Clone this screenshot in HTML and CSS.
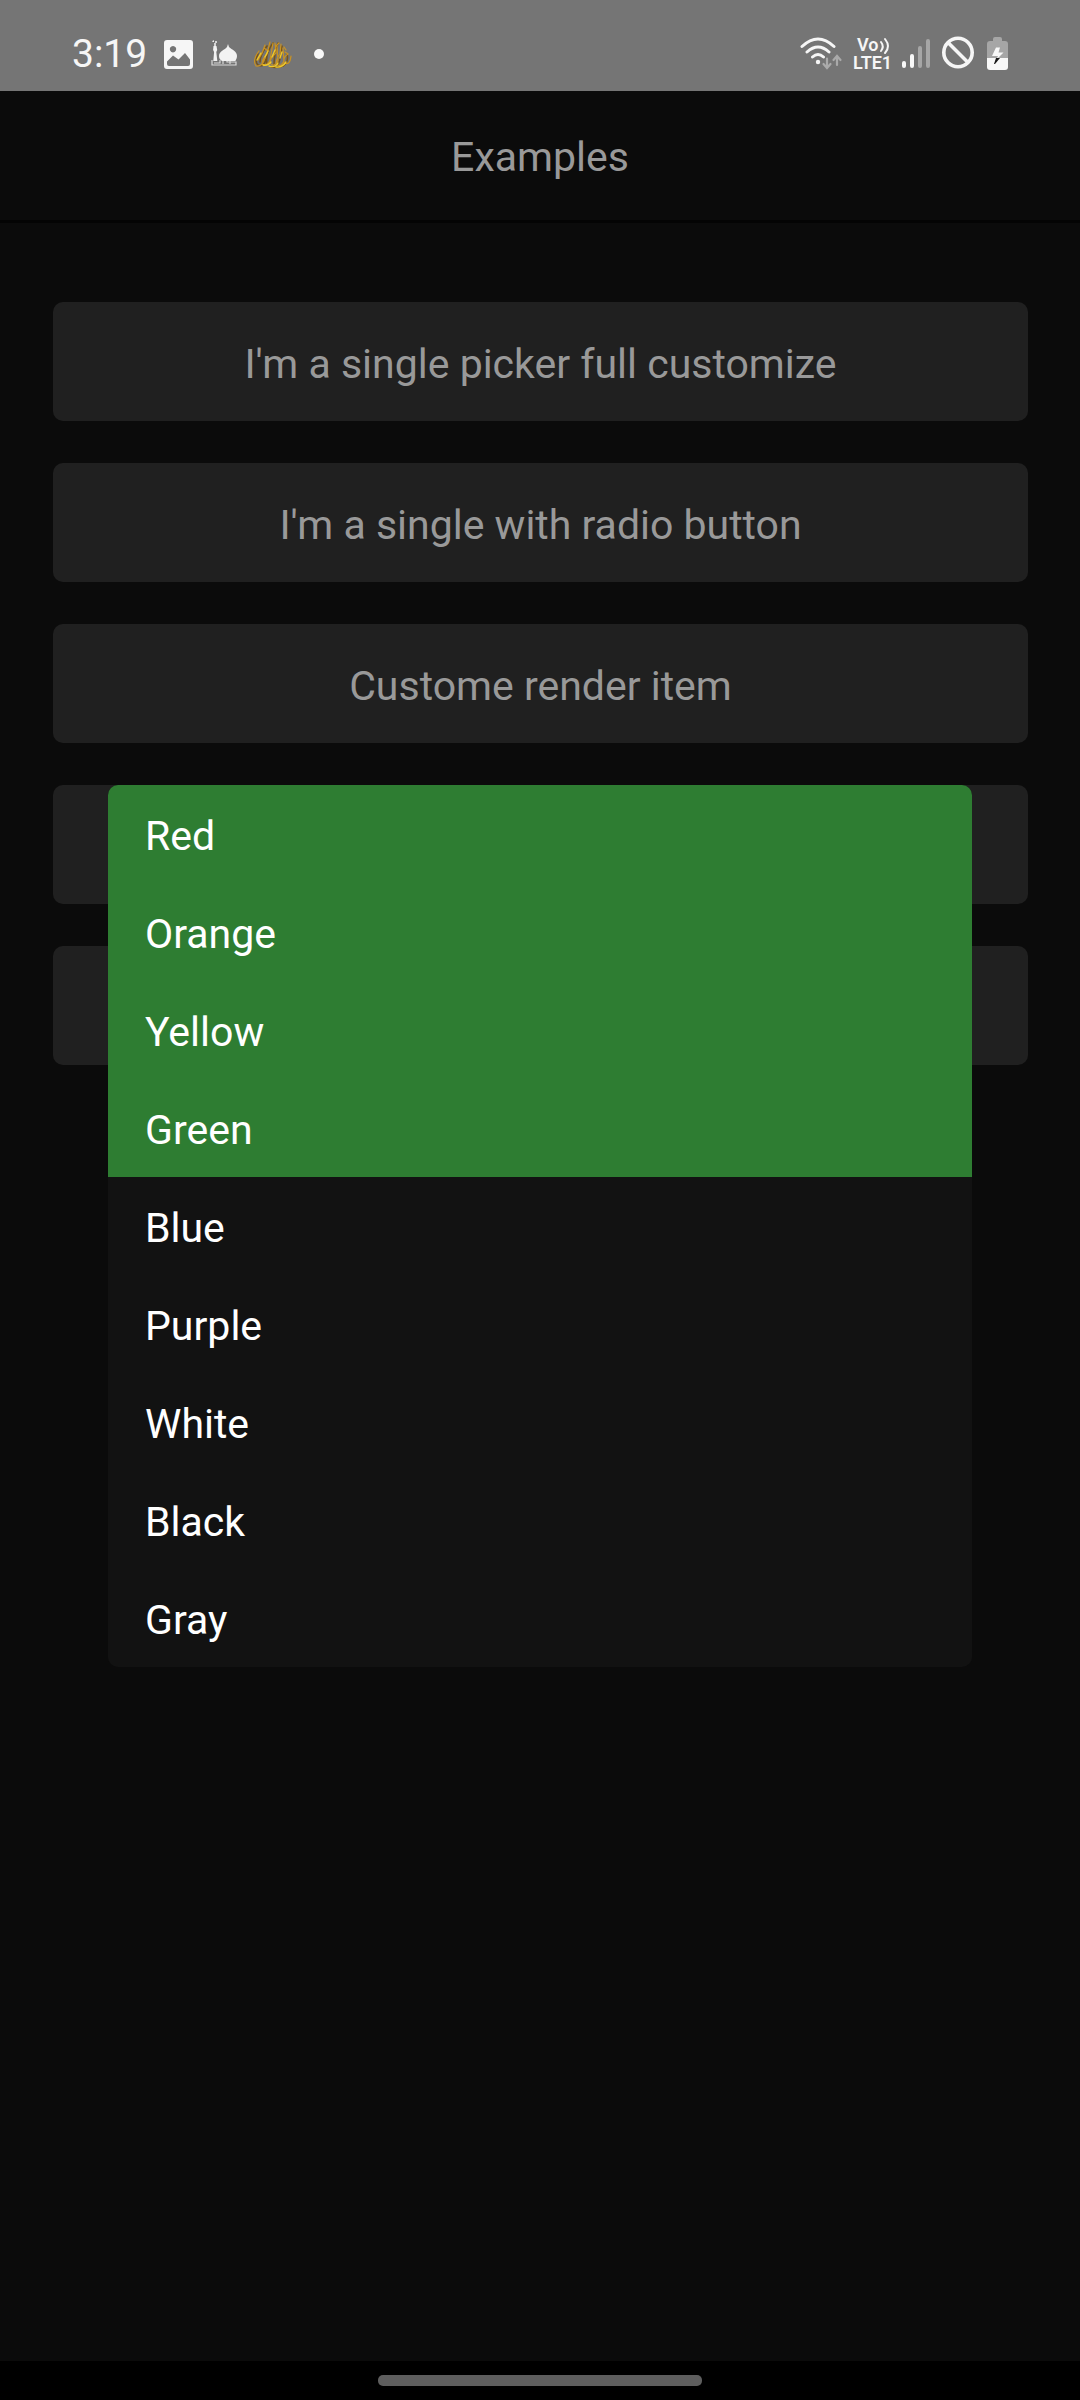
FILE: index.html
```html
<!DOCTYPE html>
<html lang="en">
<head>
<meta charset="utf-8">
<meta name="viewport" content="width=device-width, initial-scale=1">
<title>Examples</title>
<link rel="stylesheet" href="styles.css">
</head>
<body>
<div class="status-bar">
  <div class="status-group">
    <span class="clock">3:19</span>
    <svg width="32" height="36" viewBox="163 36 32 36">
      <path fill="#f6f6f6" fill-rule="evenodd" d="M167 40h23q3 0 3 3v23q0 3-3 3h-23q-3 0-3-3V43q0-3 3-3zM173 46a3.200 3.200 0 1 0 .01 0zM167 61.500V64q0 2 2 2h19q2 0 2-2v-4.500l-5-6.500-6.500 6.500-5.500-4z"/>
    </svg>
    <svg width="26" height="36" viewBox="212 36 26 36" fill="none" stroke="#f2f2f2">
      <path fill="#f2f2f2" stroke="none" d="M229 44l1 3c3 3 8 4 8 9 0 2-1 4-2 5h-13c-2-1-3-3-3-5 0-5 6-6 8-9zM214.500 46h3l.7 4-.9 2 1 9h-4l.8-9-1-2z"/>
      <path d="M216 47v-4M214 42q0-1 1-1M217 41v2" stroke-width="1.500"/>
      <path d="M213 60v5h24v-3h-9v-2h9M215 63h6v-3M224 60v4M231 60v4" stroke-width="1.200" opacity=".8"/>
    </svg>
    <svg width="40" height="36" viewBox="253 36 40 36" fill="none" stroke-linecap="round">
      <path stroke="#76541b" stroke-width="1.600" d="M258 54q-4 7 0 11 6 3 8-6M267 46q-7 9-7 16M273 43q-8 11-6 21M278 43q-4 12-4 22M282 46q-1 12-4 19M287 54q2 8-4 12-6 2-12 1"/>
      <path stroke="#c99222" stroke-width="1.200" d="M259 51q-7 9-3 15 6 1 9-8M265 45q-2 8-7 15M270 42l-3 12q-5 5-5 10 5 3 8-4l3-17M275 43l1 10q-6 5-6 10 4 5 8-2l-1-15M281 44l-1 10q-4 5-4 10 5 4 8-3l-1-13M285 52l3 2q-5 3-4 9 6 3 7-7M264 48l4 3M276 46l3-3M284 47l2 3"/>
      <path stroke="#f0c929" stroke-width="1.400" d="M263 65q5 1 8-3M269 66q6 2 9-3M276 67q6 1 10-5M268 51l-3 6M275 50l-3 7M282 52l-2 6M257 60l4-7"/>
    </svg>
    <svg width="20" height="36" viewBox="309 36 20 36"><circle cx="319" cy="54" r="5" fill="#f8f8f8"/></svg>
  </div>
  <div class="status-group status-group-right">
    <svg width="46" height="36" viewBox="799 36 46 36" fill="none" stroke-linecap="round">
      <path stroke="#f6f6f6" stroke-width="3" d="M802 46.500q16-15 32 0M807 52q11-10 22 0M812.500 57q5.500-5 11 0"/>
      <circle cx="818" cy="62" r="2.200" fill="#f6f6f6"/>
      <path stroke="#aaa" stroke-width="2.200" d="M827 58.500v9M823.500 64l3.500 4 3.500-4M837 65v-9M833.500 60l3.500-4 3.500 4"/>
    </svg>
    <svg class="volte" width="41" height="52" viewBox="853 28 41 52">
      <text x="857" y="51">Vo</text>
      <path fill="none" stroke="#f6f6f6" stroke-width="2" stroke-linecap="round" d="M881 42q3.500 4.500 0 9M885 39q6 7.500 0 14"/>
      <text x="853" y="69">LTE1</text>
    </svg>
    <svg width="30" height="36" viewBox="902 36 30 36" fill="none" stroke-width="4" stroke-linecap="round">
      <path stroke="#f8f8f8" d="M904 63v3M912 56v10"/>
      <path stroke="#a6a6a6" d="M920 48v18M928 41v25"/>
    </svg>
    <svg width="36" height="36" viewBox="940 36 36 36" fill="none" stroke="#f6f6f6" stroke-width="3.600">
      <circle cx="958" cy="52.500" r="14.200"/><path d="M948 42.500l20 20"/>
    </svg>
    <svg width="28" height="36" viewBox="984 36 28 36">
      <path fill="#a6a6a6" d="M993 41v-2q0-2 2-2h5q2 0 2 2v2h3q3 0 3 3v14h-21V44q0-3 3-3z"/>
      <path fill="#f8f8f8" d="M987 58h21v9q0 3-3 3h-15q-3 0-3-3z"/>
      <path fill="#f8f8f8" d="M996 47.500h4l-1.500 5h5L998 58h-1l1-2h-6z"/>
      <path fill="#181818" d="M996 58h4l-5 6h-1z"/>
    </svg>
  </div>
</div>
<div class="screen">
  <header class="app-header"><h1 class="title">Examples</h1></header>
  <main class="examples">
    <button class="example" type="button">I'm a single picker full customize</button>
    <button class="example" type="button">I'm a single with radio button</button>
    <button class="example" type="button">Custome render item</button>
    <button class="example" type="button"></button>
    <button class="example" type="button"></button>
  </main>
  <div class="overlay">
    <div class="picker" role="dialog" aria-modal="true">
      <button class="option selected" type="button">Red</button>
      <button class="option selected" type="button">Orange</button>
      <button class="option selected" type="button">Yellow</button>
      <button class="option selected" type="button">Green</button>
      <button class="option" type="button">Blue</button>
      <button class="option" type="button">Purple</button>
      <button class="option" type="button">White</button>
      <button class="option" type="button">Black</button>
      <button class="option" type="button">Gray</button>
    </div>
  </div>
</div>
<div class="nav-bar"><div class="nav-handle"></div></div>
</body>
</html>
```
FILE: styles.css
```css
* {
  box-sizing: border-box;
}

body {
  margin: 0;
  min-height: 100vh;
  display: flex;
  flex-direction: column;
  background: #0b0b0b;
  color: #999;
  font-family: Roboto, "Noto Sans", sans-serif;
  font-size: 41px;
}

button {
  border: 0;
  font: inherit;
  cursor: pointer;
}

.status-bar {
  height: 91px;
  padding: 17px 68px 0 72px;
  display: flex;
  justify-content: space-between;
  align-items: center;
  background: #757575;
}

.status-group {
  display: flex;
  align-items: center;
  gap: 16px;
}

.status-group-right {
  gap: 8px;
}

.clock {
  color: #f6f6f6;
  font-size: 39px;
  line-height: 36px;
}

.volte {
  overflow: visible;
  fill: #f6f6f6;
  font-size: 18px;
  font-weight: 600;
}

.screen {
  position: relative;
  flex: 1;
}

.app-header {
  padding: 42px 0 39px;
  border-bottom: 3px solid #040404;
}

.title {
  margin: 0;
  font-size: 41px;
  font-weight: 400;
  line-height: 48px;
  text-align: center;
}

.examples {
  padding: 79px 52px 79px 53px;
  display: flex;
  flex-direction: column;
  gap: 42px;
}

.example {
  height: 119px;
  padding: 4px 16px 0;
  border-radius: 10px;
  background: #202020;
  color: #999;
}

.overlay {
  position: absolute;
  inset: 0;
  display: flex;
  align-items: center;
  justify-content: center;
}

.picker {
  width: 80%;
  display: flex;
  flex-direction: column;
  overflow: hidden;
  border-radius: 10px;
  background: #121212;
}

.option {
  height: 98px;
  padding: 4px 37px 0;
  background: transparent;
  color: #fff;
  text-align: left;
}

.selected {
  background: #2e7d32;
}

.nav-bar {
  height: 39px;
  padding-top: 14px;
  background: #000;
}

.nav-handle {
  width: 30%;
  height: 11px;
  margin: 0 auto;
  border-radius: 5px;
  background: #5e5e5e;
}
```
